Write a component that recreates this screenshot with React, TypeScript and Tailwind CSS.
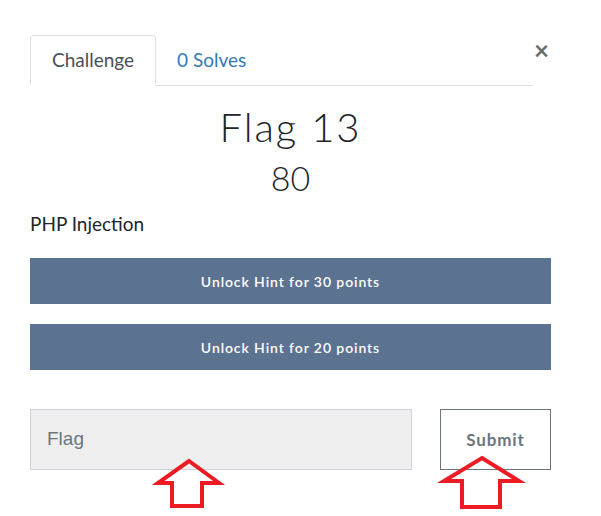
import React from 'react';

function Arrow({ points }: { points: string }) {
  return (
    <polygon
      points={points}
      fill="none"
      stroke="#ed1c24"
      strokeWidth={4}
      strokeLinejoin="miter"
    />
  );
}

export default function App() {
  return (
    <div className="relative w-[601px] h-[516px] overflow-hidden bg-white font-['Lato','Open_Sans',sans-serif] text-[#212529]">
      <div className="ml-[30px] w-[521px] pt-[35px]">
        <div className="flex items-start">
          <div className="flex w-[503px] border-b border-[#dee2e6]">
            <div className="-mb-px flex h-[51px] items-center rounded-t-[4px] border border-[#dee2e6] border-b-white bg-white px-[21px] text-[19px] text-[#495057]">
              Challenge
            </div>
            <div className="flex h-[50px] items-center px-[21px] text-[19px] text-[#337ab7]">
              0 Solves
            </div>
          </div>
          <div className="ml-auto mr-[2px] mt-[2px] text-[26px] font-bold leading-none text-[#6b6b6b]">×</div>
        </div>

        <div className="mt-[18px] text-center text-[40px] font-light leading-[46px] tracking-[2px] text-[#212529]">Flag 13</div>
        <div className="mt-[8px] text-center text-[34px] font-light leading-[40px] text-[#212529]">80</div>

        <div className="mt-[13px] text-[19px] leading-[26px] text-[#212529]">PHP Injection</div>

        <div className="mt-[21px] flex flex-col gap-[20px]">
          <div className="flex h-[46px] items-center justify-center bg-[#5b7290] text-[14px] font-semibold tracking-[0.065em] text-white">
            Unlock Hint for 30 points
          </div>
          <div className="flex h-[46px] items-center justify-center bg-[#5b7290] text-[14px] font-semibold tracking-[0.065em] text-white">
            Unlock Hint for 20 points
          </div>
        </div>

        <div className="mt-[39px] flex items-start">
          <div className="flex h-[61px] w-[382px] items-center border border-[#ced4da] bg-[#efefef] pl-[16px] text-[19px] text-[#6c757d] font-['Liberation_Sans',sans-serif]">
            Flag
          </div>
          <div className="ml-auto flex h-[61px] w-[111px] items-center justify-center border border-[#6c757d] bg-white text-[17px] font-bold tracking-[0.05em] text-[#6c757d]">
            Submit
          </div>
        </div>
      </div>

      <svg className="pointer-events-none absolute left-0 top-0" width="601" height="516">
        <Arrow points="189,461 219,483 202,483 202,506 172,506 172,483 158,483" />
        <Arrow points="482,458 519,481 500,481 500,507 462,507 462,481 444,481" />
      </svg>
    </div>
  );
}
